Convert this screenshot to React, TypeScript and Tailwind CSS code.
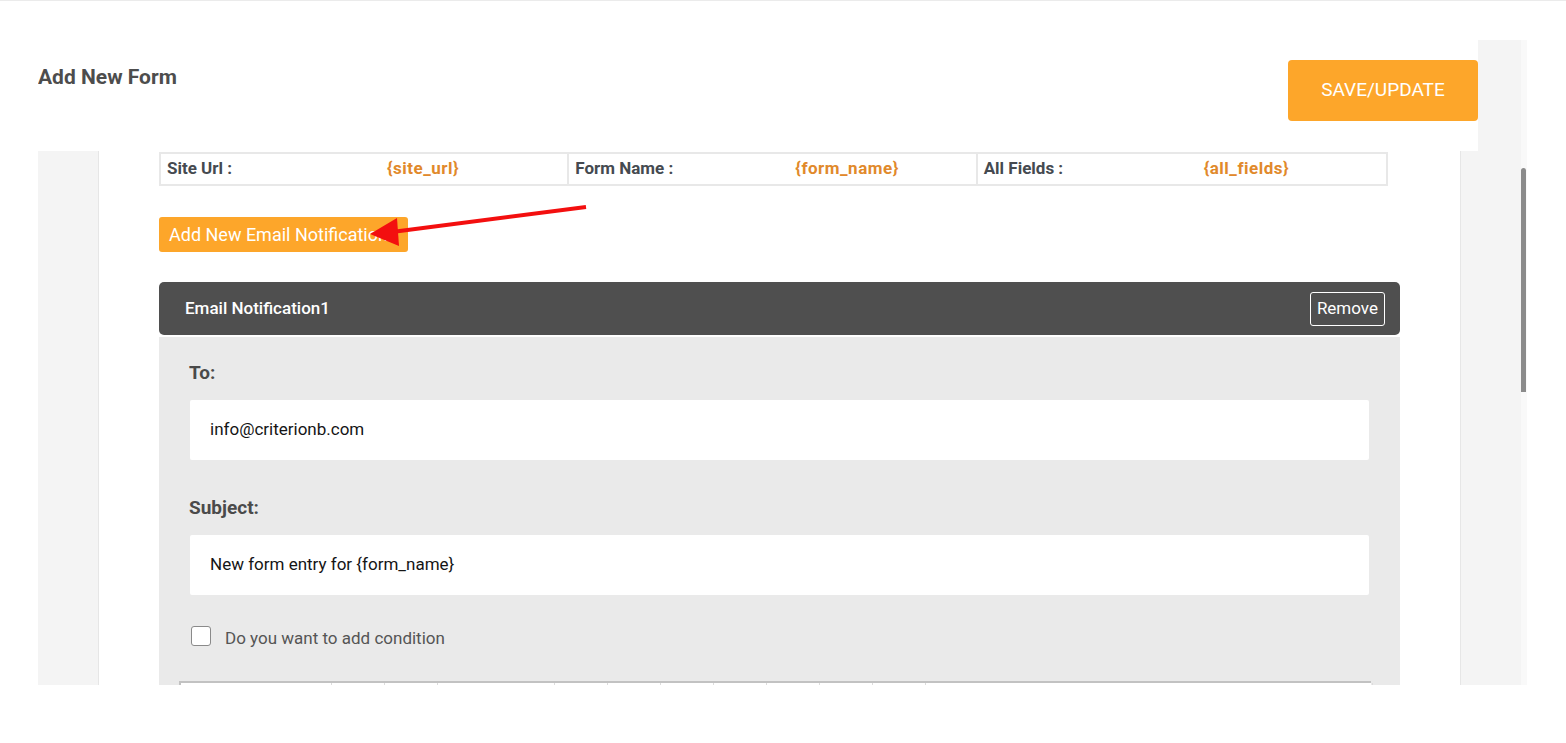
import React from "react";

const font = { fontFamily: "Roboto, 'Noto Sans', Arial, sans-serif" };

function InfoCell({ label, value, last }: { label: string; value: string; last?: boolean }) {
  return (
    <div className={`flex h-full items-center pl-[6px] ${last ? "" : "border-r-2 border-[#e8e8e8]"}`}>
      <span className="w-[220px] text-[17px] font-bold text-[#454a50]">{label}</span>
      <span className="text-[17px] font-bold tracking-[0.5px] text-[#e1892b]">{value}</span>
    </div>
  );
}

function Field({ label, value }: { label: string; value: string }) {
  return (
    <div>
      <p className="h-[24px] text-[19px] font-bold leading-[24px] text-[#4a4a4a]">{label}</p>
      <div className="mt-[15px] mr-[1px] ml-[1px] flex h-[60px] items-center rounded-[2px] bg-white pl-[20px] text-[17px] text-[#151515]">
        {value}
      </div>
    </div>
  );
}

export default function App() {
  const cols = [151, 53, 53, 117, 53, 53, 53, 53, 53, 53, 53, 447];
  return (
    <div className="relative min-h-screen border-t border-[#ebebeb] bg-white" style={font}>
      <div className="flex pt-[39px] pl-[38px]">
        <div className="flex h-[645px] w-[1483px] shrink-0 flex-col overflow-hidden bg-[#f4f4f4]">
          {/* header */}
          <div className="flex h-[111px] w-[1440px] shrink-0 items-start justify-between bg-white">
            <h1 className="pt-[24px] text-[21px] font-bold leading-[26px] text-[#4d4d4d]">Add New Form</h1>
            <button className="mt-[20px] h-[61px] w-[190px] rounded-[4px] bg-[#fda62a] text-[19px] text-white">
              SAVE/UPDATE
            </button>
          </div>

          {/* body */}
          <div className="flex flex-1">
            <div className="w-[61px] shrink-0 border-r border-[#e6e6e6]" />
            <div className="w-[1361px] shrink-0 bg-white pt-[1px] pl-[60px] pr-[60px]">
              <div className="grid h-[34px] w-[1229px] grid-cols-3 border-2 border-[#e8e8e8]">
                <InfoCell label="Site Url :" value="{site_url}" />
                <InfoCell label="Form Name :" value="{form_name}" />
                <InfoCell label="All Fields :" value="{all_fields}" last />
              </div>

              <button className="mt-[31px] flex h-[35px] w-[249px] items-center overflow-visible whitespace-nowrap rounded-[3px] bg-[#fda62a] pl-[10px] text-[18px] text-white">
                Add New Email Notification
              </button>

              <div className="mt-[30px] flex h-[53px] items-center justify-between rounded-[5px] bg-[#4f4f4f] pl-[26px] pr-[15px]">
                <span className="text-[17px] font-medium text-white">Email Notification1</span>
                <button className="h-[34px] rounded-[3px] border border-white px-[6px] text-[17px] text-white">
                  Remove
                </button>
              </div>

              <div className="mt-[2px] h-[400px] bg-[#eaeaea] pt-[24px] pl-[30px] pr-[30px]">
                <Field label="To:" value="info@criterionb.com" />
                <div className="mt-[36px]">
                  <Field label="Subject:" value="New form entry for {form_name}" />
                </div>
                <label className="mt-[31px] ml-[2px] flex h-[20px] items-center gap-[14px]">
                  <span className="h-[20px] w-[20px] shrink-0 rounded-[3px] border border-[#8a8a8a] bg-white" />
                  <span className="pt-[3px] text-[17px] leading-[20px] text-[#555]">Do you want to add condition</span>
                </label>
                <div className="mt-[35px] ml-[-10px] mr-[-1px] flex h-[20px] border-t-2 border-l-2 border-[#c2c2c2] bg-white">
                  {cols.map((w, i) => (
                    <div key={i} className="shrink-0 border-r border-[#dcdcdc]" style={{ width: w }} />
                  ))}
                </div>
              </div>
            </div>
            <div className="w-[61px] shrink-0 border-l border-[#e6e6e6]" />
          </div>
        </div>
        <div className="h-[645px] w-[6px] shrink-0 bg-[#f9f9f9] pt-[128px]">
          <div className="h-[224px] w-[5px] rounded-t-[3px] bg-[#8b8b8b]" />
        </div>
      </div>

      {/* red annotation arrow */}
      <svg className="pointer-events-none absolute left-0 top-0" width="1566" height="743">
        <line x1="586" y1="206" x2="392" y2="231" stroke="#f30f0f" strokeWidth="4" />
        <polygon points="370,233 397,217 399,245" fill="#f30f0f" />
      </svg>
    </div>
  );
}
